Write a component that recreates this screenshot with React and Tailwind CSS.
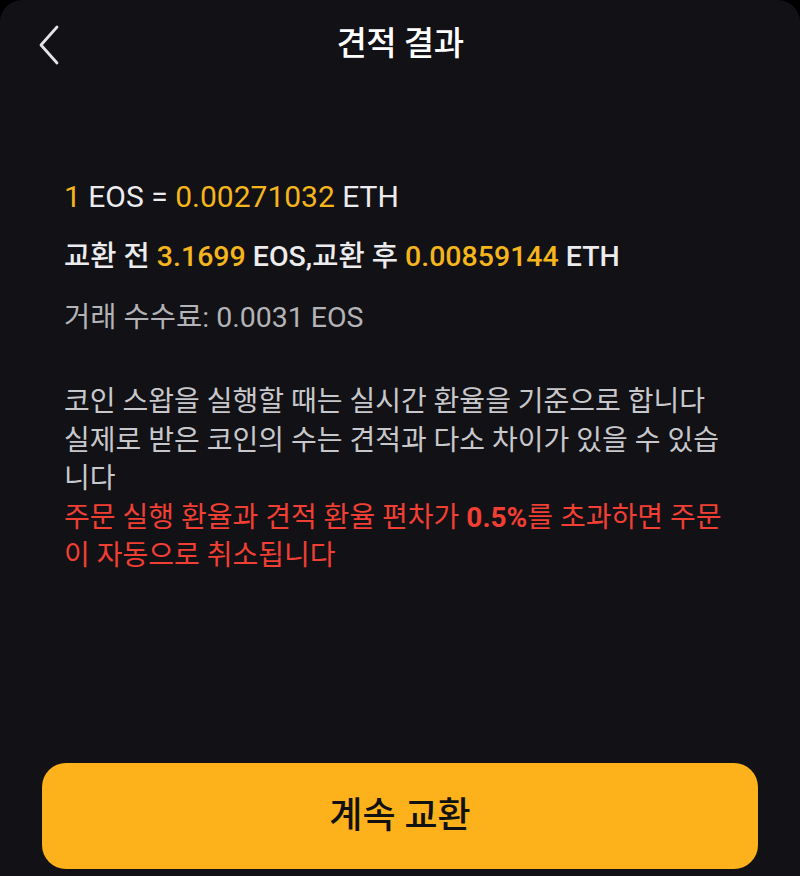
export default function App() {
  const font = { fontFamily: 'Roboto, "Noto Sans CJK KR", sans-serif' };
  return (
    <div className="w-[800px] h-[876px] bg-black" style={font}>
      <div className="w-full h-full bg-[#111116] rounded-t-[22px] flex flex-col">
        <div className="relative h-[88px] flex items-center justify-center">
          <svg className="absolute left-[36px] top-[24px]" width="28" height="42" viewBox="0 0 28 42" fill="none">
            <path d="M21 3 L5 21 L21 39" stroke="#e4e4e6" strokeWidth="2.8" strokeLinecap="round" strokeLinejoin="round" />
          </svg>
          <div className="text-[33px] font-medium text-white tracking-[-0.5px]">견적 결과</div>
        </div>
        <div className="pl-[64px] pr-[64px] pt-[89px] flex flex-col">
          <div className="text-[30px] font-normal leading-[40px] text-[#ececee]">
            <span className="text-[#f5b51c]">1</span> EOS = <span className="text-[#f5b51c]">0.00271032</span> ETH
          </div>
          <div className="mt-[20px] text-[28.5px] font-medium leading-[40px] text-[#ececee]">
            교환 전 <span className="text-[#f5b51c]">3.1699</span> EOS,교환 후 <span className="text-[#f5b51c]">0.00859144</span> ETH
          </div>
          <div className="mt-[21px] text-[28.5px] leading-[40px] text-[#b4b4b8]">
            거래 수수료: 0.0031 EOS
          </div>
          <div className="mt-[45px] text-[28px] leading-[38.5px] text-[#c8c8cc]">
            <div>코인 스왑을 실행할 때는 실시간 환율을 기준으로 합니다</div>
            <div>실제로 받은 코인의 수는 견적과 다소 차이가 있을 수 있습니다</div>
          </div>
          <div className="text-[28px] leading-[38.5px] text-[#f23f33]">
            주문 실행 환율과 견적 환율 편차가 <span className="font-bold">0.5%</span>를 초과하면 주문이 자동으로 취소됩니다
          </div>
        </div>
        <div className="mt-auto px-[42px] pb-[7px]">
          <button className="w-full h-[106px] rounded-[24px] bg-[#fdb11a] text-[#111111] text-[36px] font-medium">
            계속 교환
          </button>
        </div>
      </div>
    </div>
  );
}
